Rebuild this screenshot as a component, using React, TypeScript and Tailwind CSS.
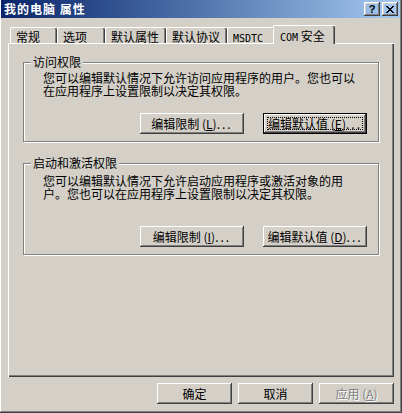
import React from 'react';

const raised =
  'shadow-[inset_-1px_-1px_0_#404040,inset_1px_1px_0_#ffffff,inset_-2px_-2px_0_#808080,inset_2px_2px_0_#d4d0c8]';

const tabs = [
  { label: '常规', w: 'w-[47px]' },
  { label: '选项', w: 'w-[48px]' },
  { label: '默认属性', w: 'w-[61px]' },
  { label: '默认协议', w: 'w-[61px]' },
  { label: 'MSDTC', w: 'w-[48px]', mono: true },
];

const Btn = ({
  text,
  hot,
  tail = '...',
  isDefault = false,
  disabled = false,
  w = 'w-[104px]',
}: {
  text: string;
  hot: string;
  tail?: string;
  isDefault?: boolean;
  disabled?: boolean;
  w?: string;
}) => {
  const label = (
    <span
      className={`whitespace-nowrap text-[12px] leading-[13px] ${
        disabled ? 'text-[#808080] [text-shadow:1px_1px_0_#ffffff]' : 'text-black'
      }`}
    >
      {text}
      {hot && (
        <>
          {' '}(<u>{hot}</u>)
        </>
      )}
      {tail && <span className="tracking-[2px]">{tail}</span>}
    </span>
  );

  if (isDefault) {
    return (
      <div className={`${w} h-[21px] border border-black flex`}>
        <div className={`flex-1 flex p-[3px] ${raised}`}>
          <div className="flex-1 flex items-center justify-center border border-dotted border-black">
            {label}
          </div>
        </div>
      </div>
    );
  }

  return (
    <div className={`${w} h-[21px] flex items-center justify-center ${raised}`}>
      {label}
    </div>
  );
};

const GroupBox = ({
  title,
  lines,
  h,
  pt,
  children,
}: {
  title: string;
  lines: string[];
  h: string;
  pt: string;
  children: React.ReactNode;
}) => (
  <div
    className={`relative w-[356px] ${h} border border-[#808080] shadow-[inset_1px_1px_0_#ffffff,1px_1px_0_#ffffff] flex flex-col`}
  >
    <span className="absolute left-[7px] top-[-8px] px-[2px] bg-[#d4d0c8] text-[12px] leading-[13px] text-black">
      {title}
    </span>
    <div className={`pl-[19px] ${pt} text-[12px] leading-[13px] text-black`}>
      {lines.map((l) => (
        <div key={l} className="whitespace-nowrap">
          {l}
        </div>
      ))}
    </div>
    <div className="mt-auto flex justify-end gap-[19px] pr-[11px] pb-[7px]">{children}</div>
  </div>
);

export default function App() {
  return (
    <div className="w-[402px] h-[413px] bg-[#d4d0c8] border-r border-b border-[#404040] font-['Noto_Sans_CJK_SC',sans-serif] select-none">
      <div className="h-full flex flex-col border-r border-b border-[#808080] border-l border-l-white">
        {/* Title bar */}
        <div className="h-[18px] flex items-center bg-gradient-to-r from-[#0a246a] to-[#a6caf0] pr-[2px]">
          <span className="pl-[3px] text-[12px] leading-[14px] font-bold text-white tracking-[1px]">
            我的电脑 属性
          </span>
          <div className="ml-auto flex gap-[2px]">
            <div className={`w-[16px] h-[14px] flex items-center justify-center ${raised}`}>
              <span className="font-['Liberation_Sans',sans-serif] font-bold text-[11px] leading-[11px] text-black">
                ?
              </span>
            </div>
            <div className={`w-[16px] h-[14px] flex items-center justify-center ${raised}`}>
              <svg width="8" height="7" viewBox="0 0 8 7" shapeRendering="crispEdges">
                <path
                  d="M0 0h2v1H0zM6 0h2v1H6zM1 1h2v1H1zM5 1h2v1H5zM2 2h4v1H2zM3 3h2v1H3zM2 4h4v1H2zM1 5h2v1H1zM5 5h2v1H5zM0 6h2v1H0zM6 6h2v1H6z"
                  fill="#000"
                />
              </svg>
            </div>
          </div>
        </div>

        <div className="pl-[7px]">
          {/* Tabs */}
          <div className="mt-[7px] h-[18px] flex pl-[2px] text-[12px] text-black">
            {tabs.map((t) => (
              <div
                key={t.label}
                className={`${t.w} mt-[2px] h-[16px] border-l border-t border-white rounded-tl-[2px] rounded-tr-[2px] shadow-[inset_-1px_0_0_#404040,inset_-2px_0_0_#808080] pl-[5px] pt-[2px] leading-[13px] whitespace-nowrap`}
              >
                {t.mono ? (
                  <span className="font-['DejaVu_Sans_Mono',monospace] text-[10px]">{t.label}</span>
                ) : (
                  t.label
                )}
              </div>
            ))}
            <div className="relative z-10 ml-[-2px] w-[62px] h-[19px] bg-[#d4d0c8] border-l border-t border-white rounded-tl-[2px] rounded-tr-[2px] shadow-[inset_-1px_0_0_#404040,inset_-2px_0_0_#808080] pl-[6px] pt-[3px] leading-[13px] whitespace-nowrap">
              <span className="font-['DejaVu_Sans_Mono',monospace] text-[10px]">COM</span> 安全
            </div>
          </div>

          {/* Panel */}
          <div className="w-[386px] h-[334px] border-l border-t border-white shadow-[inset_-1px_-1px_0_#404040,inset_-2px_-2px_0_#808080] pl-[14px] pt-[18px]">
            <GroupBox
              title="访问权限"
              h="h-[80px]"
              pt="pt-[8px]"
              lines={[
                '您可以编辑默认情况下允许访问应用程序的用户。您也可以',
                '在应用程序上设置限制以决定其权限。',
              ]}
            >
              <Btn text="编辑限制" hot="L" />
              <Btn text="编辑默认值" hot="E" isDefault />
            </GroupBox>
            <div className="mt-[21px]">
              <GroupBox
                title="启动和激活权限"
                h="h-[92px]"
                pt="pt-[10px]"
                lines={[
                  '您可以编辑默认情况下允许启动应用程序或激活对象的用',
                  '户。您也可以在应用程序上设置限制以决定其权限。',
                ]}
              >
                <Btn text="编辑限制" hot="I" />
                <Btn text="编辑默认值" hot="D" />
              </GroupBox>
            </div>
          </div>

          {/* Dialog buttons */}
          <div className="w-[386px] mt-[6px] flex justify-end gap-[6px]">
            <Btn text="确定" hot="" tail="" w="w-[75px]" />
            <Btn text="取消" hot="" tail="" w="w-[75px]" />
            <Btn text="应用" hot="A" tail="" w="w-[75px]" disabled />
          </div>
        </div>
      </div>
    </div>
  );
}
